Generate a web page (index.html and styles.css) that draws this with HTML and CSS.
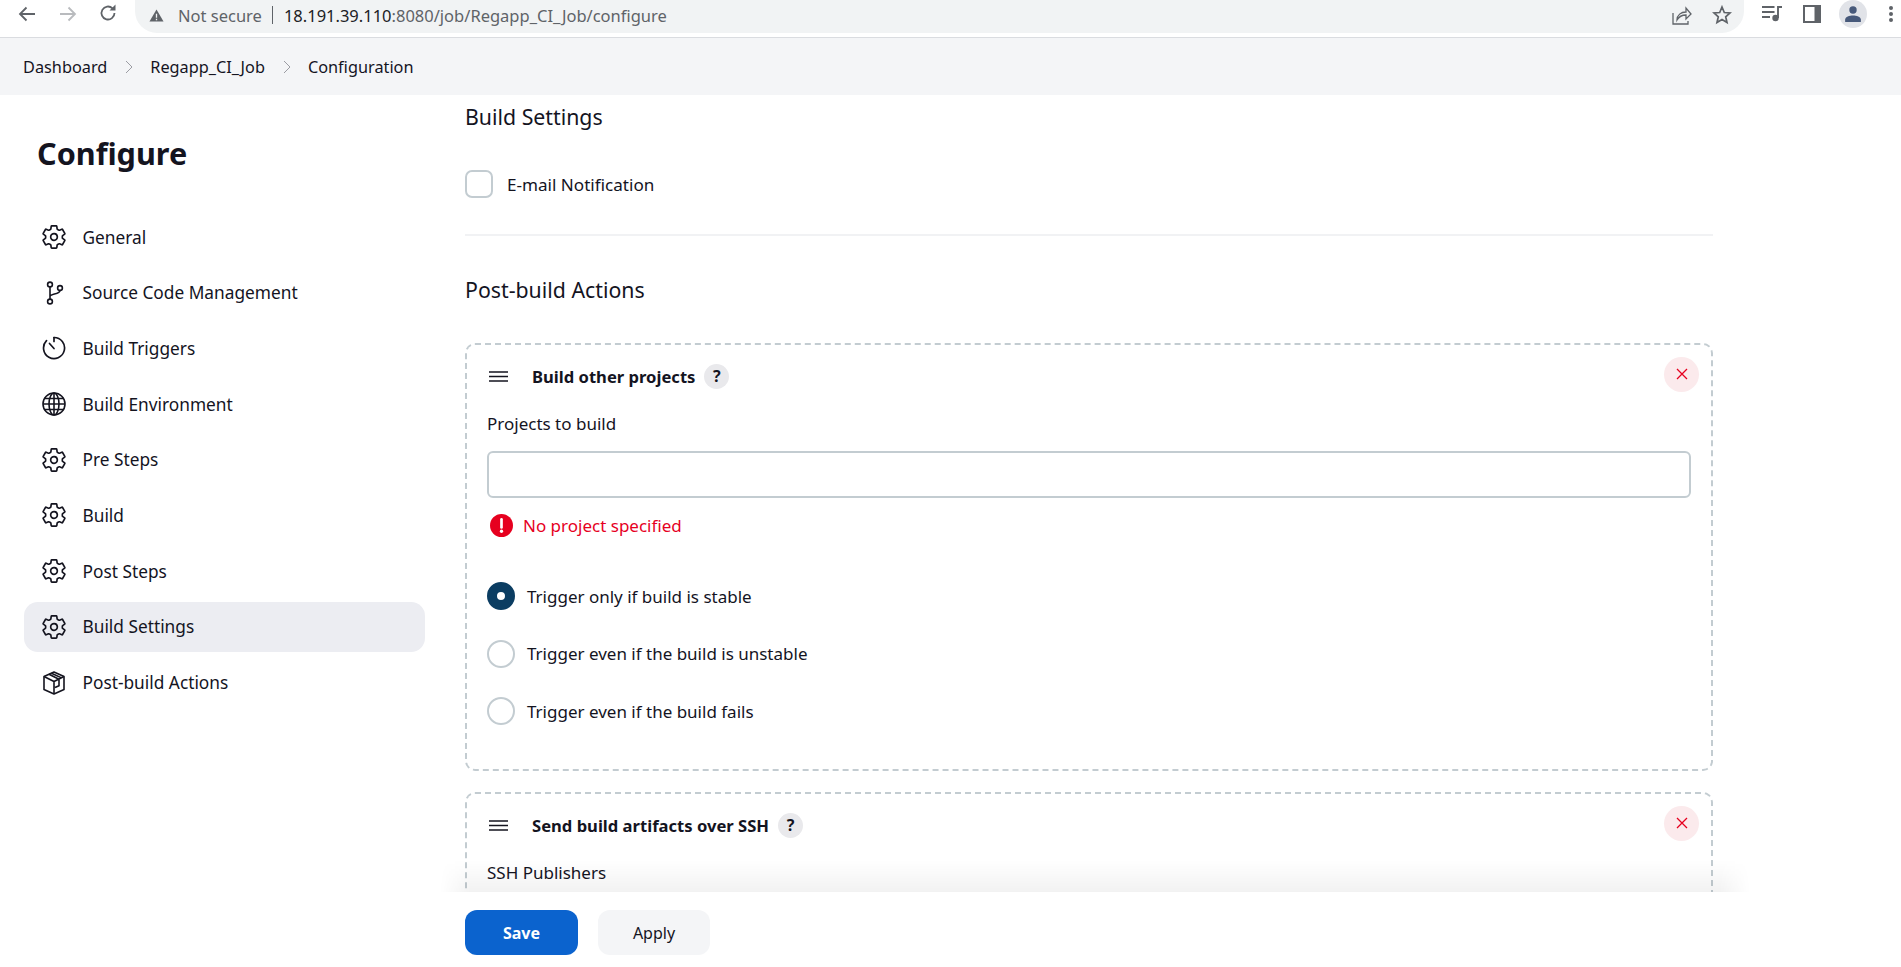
FILE: index.html
```html
<!DOCTYPE html>
<html>
<head>
    <meta charset="utf-8" />
    <title>Regapp_CI_Job Config</title>
    <link rel="stylesheet" href="styles.css">
</head>
<body>
    <svg class="defs" width="0" height="0">
        <symbol id="gear" viewBox="26 26 460 460">
            <path fill="none" stroke="currentColor" stroke-width="32" stroke-linecap="round" stroke-linejoin="round" d="M262.29 192.31a64 64 0 1057.4 57.4 64.13 64.13 0 00-57.4-57.4zM416.39 256a154.34 154.34 0 01-1.53 20.79l45.21 35.46a10.81 10.81 0 012.45 13.75l-42.77 74a10.81 10.81 0 01-13.14 4.59l-44.9-18.08a16.11 16.11 0 00-15.17 1.75A164.48 164.48 0 01325 400.8a15.94 15.94 0 00-8.82 12.14l-6.73 47.89a11.08 11.08 0 01-10.68 9.17h-85.54a11.11 11.11 0 01-10.69-8.87l-6.72-47.82a16.07 16.07 0 00-9-12.22 155.3 155.3 0 01-21.46-12.57 16 16 0 00-15.11-1.71l-44.89 18.07a10.81 10.81 0 01-13.14-4.58l-42.77-74a10.8 10.8 0 012.45-13.75l38.21-30a16.05 16.05 0 006-14.08c-.36-4.17-.58-8.33-.58-12.5s.21-8.27.58-12.35a16 16 0 00-6.07-13.94l-38.19-30A10.81 10.81 0 0149.48 186l42.77-74a10.81 10.81 0 0113.14-4.59l44.9 18.08a16.11 16.11 0 0015.17-1.75A164.48 164.48 0 01187 111.2a15.94 15.94 0 008.82-12.14l6.73-47.89A11.08 11.08 0 01213.23 42h85.54a11.11 11.11 0 0110.69 8.87l6.72 47.82a16.07 16.07 0 009 12.22 155.3 155.3 0 0121.46 12.57 16 16 0 0015.11 1.71l44.89-18.07a10.81 10.81 0 0113.14 4.58l42.77 74a10.8 10.8 0 01-2.45 13.75l-38.21 30a16.05 16.05 0 00-6.05 14.08c.33 4.14.55 8.3.55 12.47z"/>
        </symbol>
        <symbol id="drag" viewBox="0 0 19 11">
            <path fill="none" stroke="currentColor" stroke-width="1.5" d="M0 1h19M0 5.5h19M0 10h19"/>
        </symbol>
    </svg>

    <div class="toolbar">
        <svg class="nav-icon" viewBox="0 0 20 20"><path d="M18 10H3M9.5 3.5L3 10l6.5 6.500" fill="none" stroke="#5f6368" stroke-width="1.800"/></svg>
        <svg class="nav-icon" viewBox="0 0 20 20"><path d="M2 10h15M10.500 3.500L17 10l-6.500 6.500" fill="none" stroke="#b9bbbe" stroke-width="1.800"/></svg>
        <svg class="nav-icon reload" viewBox="0 0 20 20"><path d="M16.500 10a6.500 6.500 0 1 1-2-4.700" fill="none" stroke="#5f6368" stroke-width="1.800"/><path d="M17.500 1.500v6h-6z" fill="#5f6368"/></svg>
        <div class="omnibox">
            <svg class="warn" viewBox="0 0 16 16"><path d="M8 1.500L15.500 14.500H.5z" fill="#5f6368"/><path d="M8 6v4.500M8 11.500v1.500" stroke="#f1f3f4" stroke-width="1.400"/></svg>
            <span class="not-secure">Not secure</span>
            <span class="omni-sep"></span>
            <span class="url">18.191.39.110<span class="url-dim">:8080/job/Regapp_CI_Job/configure</span></span>
            <svg class="omni-icon share" viewBox="0 0 20 20"><path d="M1 8v11h15v-3M5 15c0-5 4-8 9-8V3l5 6-5 5v-4c-4 0-7 1.500-9 5z" fill="none" stroke="#5f6368" stroke-width="1.300"/></svg>
            <svg class="omni-icon" viewBox="0 0 20 20"><path d="M10 2l2.300 5.500 5.700.5-4.300 3.800 1.300 5.700-5-3-5 3 1.300-5.700L2 8l5.700-.5z" fill="none" stroke="#5f6368" stroke-width="1.700"/></svg>
        </div>
        <svg class="tool-icon media" viewBox="0 0 20 16"><path d="M0 1h12.500M0 6h12.500M0 11h8" stroke="#5f6368" stroke-width="1.800"/><path d="M16 12V1h4" fill="none" stroke="#5f6368" stroke-width="1.900"/><circle cx="13.500" cy="12" r="3.200" fill="#5f6368"/></svg>
        <svg class="tool-icon side" viewBox="0 0 18 18"><rect width="18" height="18" fill="#5f6368"/><rect x="2" y="2" width="9.500" height="14" fill="#fff"/></svg>
        <div class="avatar">
            <svg viewBox="0 0 16 16" width="18" height="18"><circle cx="8" cy="4.500" r="3.300" fill="#47597a"/><path d="M1 15v-2c0-2.500 4-3.700 7-3.700s7 1.200 7 3.700v2z" fill="#47597a"/></svg>
        </div>
        <div class="kebab"><i></i><i></i><i></i></div>
    </div>

    <div class="crumbs">
        <span>Dashboard</span>
        <svg class="chev" viewBox="0 0 8 14"><path d="M1 1l6 6-6 6" fill="none" stroke="#9b9ca3" stroke-width="1"/></svg>
        <span>Regapp_CI_Job</span>
        <svg class="chev" viewBox="0 0 8 14"><path d="M1 1l6 6-6 6" fill="none" stroke="#9b9ca3" stroke-width="1"/></svg>
        <span>Configuration</span>
    </div>

    <div class="page">
        <div class="sidebar">
            <h1 class="title">Configure</h1>
            <div class="menu">
                <a class="item"><svg class="icon"><use href="#gear"/></svg>General</a>
                <a class="item">
                    <svg class="icon" viewBox="0 0 24 24" fill="none" stroke="currentColor" stroke-width="1.600"><circle cx="8" cy="3.500" r="2.400"/><circle cx="8" cy="20.500" r="2.400"/><circle cx="18" cy="7" r="2.400"/><path d="M8 5.900v12.200M8 15.500c0-3 10-2 10-6.100"/></svg>
                    Source Code Management
                </a>
                <a class="item">
                    <svg class="icon" viewBox="0 0 24 24" fill="none" stroke="currentColor" stroke-width="1.700" stroke-linecap="round"><path d="M12 1.500a10.500 10.500 0 1 1-7.500 3.200"/><path d="M12 1.500v4M12 12.500L7.500 7.500"/></svg>
                    Build Triggers
                </a>
                <a class="item">
                    <svg class="icon" viewBox="0 0 24 24" fill="none" stroke="currentColor" stroke-width="1.600"><circle cx="12" cy="12" r="11"/><ellipse cx="12" cy="12" rx="5" ry="11"/><path d="M12 1v22M1 12h22M2.500 6.500h19M2.500 17.500h19"/></svg>
                    Build Environment
                </a>
                <a class="item"><svg class="icon"><use href="#gear"/></svg>Pre Steps</a>
                <a class="item"><svg class="icon"><use href="#gear"/></svg>Build</a>
                <a class="item"><svg class="icon"><use href="#gear"/></svg>Post Steps</a>
                <a class="item active"><svg class="icon"><use href="#gear"/></svg>Build Settings</a>
                <a class="item">
                    <svg class="icon" viewBox="0 0 24 24" fill="none" stroke="currentColor" stroke-width="1.600" stroke-linejoin="round"><path d="M12 1l10 4.500v13L12 23 2 18.500v-13z"/><path d="M2 5.500l10 5 10-5M12 10.500V23M7 3.300l10 4.900v6.500l-4 1.800M9.500 2.200l10 4.700"/></svg>
                    Post-build Actions
                </a>
            </div>
        </div>

        <div class="main">
            <h2 class="section first">Build Settings</h2>
            <label class="check-row"><span class="checkbox"></span>E-mail Notification</label>
            <div class="divider"></div>
            <h2 class="section">Post-build Actions</h2>

            <div class="card">
                <div class="card-head">
                    <svg class="handle"><use href="#drag"/></svg>
                    <b class="card-title">Build other projects</b>
                    <span class="help">?</span>
                    <span class="close"><svg viewBox="0 0 12 12" width="12" height="12"><path d="M1 1l10 10M11 1L1 11" stroke="#e6001f" stroke-width="1.300"/></svg></span>
                </div>
                <div class="field-label">Projects to build</div>
                <input class="text-input" type="text" />
                <div class="error">
                    <svg class="error-icon" viewBox="0 0 24 24"><circle cx="12" cy="12" r="12" fill="#e6001f"/><path d="M12 5.500v8.500" stroke="#fff" stroke-width="2.800" stroke-linecap="round"/><circle cx="12" cy="18" r="1.700" fill="#fff"/></svg>
                    No project specified
                </div>
                <div class="radios">
                    <label class="radio-row"><span class="radio checked"></span>Trigger only if build is stable</label>
                    <label class="radio-row"><span class="radio"></span>Trigger even if the build is unstable</label>
                    <label class="radio-row"><span class="radio"></span>Trigger even if the build fails</label>
                </div>
            </div>

            <div class="card">
                <div class="card-head">
                    <svg class="handle"><use href="#drag"/></svg>
                    <b class="card-title">Send build artifacts over SSH</b>
                    <span class="help">?</span>
                    <span class="close"><svg viewBox="0 0 12 12" width="12" height="12"><path d="M1 1l10 10M11 1L1 11" stroke="#e6001f" stroke-width="1.300"/></svg></span>
                </div>
                <div class="field-label">SSH Publishers</div>
            </div>
        </div>
    </div>

    <div class="actions">
        <button class="btn save">Save</button>
        <button class="btn apply">Apply</button>
    </div>
</body>
</html>
```

FILE: styles.css
```css
html, body {
    margin: 0;
    height: 100%;
    overflow: hidden;
}
body {
    position: relative;
    background: #fff;
    color: #14141f;
    font-family: "Noto Sans", "Open Sans", sans-serif;
    font-size: 17px;
}
.defs {
    position: absolute;
}

/* browser chrome */
.toolbar {
    display: flex;
    align-items: flex-start;
    height: 37px;
    border-bottom: 1px solid #dadce0;
    padding-left: 17px;
    box-sizing: content-box;
}
.nav-icon {
    width: 20px;
    height: 20px;
    margin: 4px 21px 0 0;
}
.nav-icon.reload {
    margin-left: -1px;
    margin-top: 3px;
}
.omnibox {
    display: flex;
    align-items: center;
    width: 1609px;
    height: 33px;
    margin-left: -4px;
    padding: 0 0 3px 14px;
    box-sizing: border-box;
    background: #f1f3f4;
    border-radius: 0 0 22px 22px;
    font-size: 16.5px;
}
.warn {
    width: 15px;
    height: 15px;
}
.not-secure {
    margin-left: 14px;
    color: #5f6368;
}
.omni-sep {
    width: 1px;
    height: 18px;
    margin: 0 11px 0 10px;
    background: #5f6368;
}
.url {
    color: #202124;
}
.url-dim {
    color: #5f6368;
}
.omni-icon {
    width: 20px;
    height: 20px;
    margin-right: 12px;
}
.share {
    margin-left: auto;
    margin-right: 20px;
}
.tool-icon.media {
    width: 20px;
    height: 16px;
    margin: 6px 0 0 18px;
}
.tool-icon.side {
    width: 18px;
    height: 18px;
    margin: 5px 0 0 21px;
}
.avatar {
    display: flex;
    align-items: center;
    justify-content: center;
    width: 28px;
    height: 28px;
    margin-left: 18px;
    border-radius: 50%;
    background: #e1e3e8;
}
.kebab {
    display: flex;
    flex-direction: column;
    gap: 2px;
    margin: 6px 0 0 22px;
}
.kebab i {
    width: 4px;
    height: 4px;
    border-radius: 50%;
    background: #5f6368;
}

/* breadcrumb */
.crumbs {
    display: flex;
    align-items: center;
    height: 57px;
    padding-left: 23px;
    background: #f4f5f7;
    font-size: 16.3px;
}
.chev {
    width: 8px;
    height: 14px;
    margin: 0 17px 0 18px;
}

/* layout */
.page {
    display: flex;
    align-items: flex-start;
}
.sidebar {
    width: 401px;
    margin-left: 24px;
    flex-shrink: 0;
}
.title {
    margin: 36px 0 37px 13px;
    font-size: 30.600px;
    line-height: 44px;
    font-weight: 700;
}
.menu {
    display: flex;
    flex-direction: column;
    gap: 5.7px;
}
.item {
    display: flex;
    align-items: center;
    gap: 16.5px;
    height: 50px;
    padding-left: 18px;
    border-radius: 14px;
    font-size: 17.3px;
}
.item.active {
    background: #ecedf2;
}
.icon {
    width: 24px;
    height: 24px;
    flex-shrink: 0;
}
.main {
    width: 1248px;
    margin-left: 40px;
    flex-shrink: 0;
}
.section {
    margin: 0 0 39px;
    font-size: 21.3px;
    line-height: 28px;
    font-weight: 400;
}
.section.first {
    margin-top: 8px;
}
.check-row {
    display: flex;
    align-items: center;
    gap: 14px;
    height: 28px;
    font-size: 17.1px;
}
.checkbox {
    width: 28px;
    height: 28px;
    box-sizing: border-box;
    border: 2.5px solid #c3ccd1;
    border-radius: 7px;
}
.divider {
    height: 2px;
    margin: 36px 0 40px;
    background: #f1f2f4;
}

/* cards */
.card {
    margin-bottom: 21px;
    padding: 13px 20px 44px;
    border: 2px dashed #c3ccd1;
    border-radius: 10px;
}
.card-head {
    display: flex;
    align-items: center;
    height: 36px;
    padding-left: 2px;
}
.handle {
    width: 19px;
    height: 11px;
    margin-right: 24px;
}
.card-title {
    font-size: 16.6px;
    font-weight: 700;
}
.help {
    display: flex;
    align-items: center;
    justify-content: center;
    width: 25px;
    height: 25px;
    margin-left: 9px;
    border-radius: 50%;
    background: #e9e9ec;
    font-size: 16px;
    font-weight: 700;
}
.close {
    display: flex;
    align-items: center;
    justify-content: center;
    width: 35px;
    height: 35px;
    margin: -4px -8px 0 auto;
    border-radius: 50%;
    background: #fbeaec;
}
.field-label {
    margin-top: 18px;
    line-height: 24px;
}
.text-input {
    display: block;
    width: 100%;
    height: 47px;
    margin-top: 15px;
    box-sizing: border-box;
    border: 2px solid #c3ccd1;
    border-radius: 6px;
    background: #fff;
}
.error {
    display: flex;
    align-items: center;
    gap: 10px;
    height: 24px;
    margin-top: 15px;
    padding-left: 3px;
    color: #e6001f;
}
.error-icon {
    width: 23px;
    height: 23px;
}
.radios {
    display: flex;
    flex-direction: column;
    gap: 29.500px;
    margin-top: 45px;
}
.radio-row {
    display: flex;
    align-items: center;
    gap: 12px;
    height: 28px;
}
.radio {
    width: 28px;
    height: 28px;
    box-sizing: border-box;
    border: 2.5px solid #c3ccd1;
    border-radius: 50%;
}
.radio.checked {
    border: 10px solid #0b3d62;
    background: #fff;
}

/* bottom bar lies over the scrolled form */
.actions {
    position: absolute;
    left: 0;
    right: 0;
    bottom: 0;
    display: flex;
    gap: 20px;
    height: 75px;
    padding: 18px 0 0 465px;
    box-sizing: border-box;
    background: #fff;
}
.actions::before {
    content: "";
    position: absolute;
    left: 440px;
    width: 1310px;
    top: -32px;
    height: 32px;
    background: linear-gradient(rgba(0, 0, 0, 0), rgba(0, 0, 0, 0.05));
    -webkit-mask-image: linear-gradient(90deg, transparent, #000 30px, #000 calc(100% - 30px), transparent);
}
.btn {
    height: 45px;
    border: 0;
    border-radius: 12px;
    font-family: inherit;
    font-size: 16px;
}
.save {
    width: 113px;
    background: #0b63ce;
    color: #fff;
    font-weight: 700;
}
.apply {
    width: 112px;
    background: #f4f5f7;
    color: #14141f;
}
```
